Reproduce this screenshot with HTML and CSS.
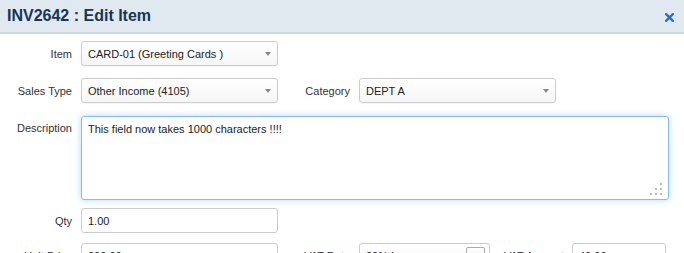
FILE: index.html
```html
<!DOCTYPE html>
<html lang="en">
<head>
  <meta charset="UTF-8" />
  <meta name="viewport" content="width=device-width, initial-scale=1.0" />
  <title>INV2642 : Edit Item</title>
  <link rel="stylesheet" href="styles.css">
</head>
<body>
  <header class="dialog-head">
    <h1>INV2642 : Edit Item</h1>
    <a class="close" href="#" title="Close">
      <svg width="9" height="9" viewBox="0 0 9 9">
        <path d="M1.2 1.2 L7.8 7.8 M7.8 1.2 L1.2 7.8" stroke="#2b72c2" stroke-width="2.4" stroke-linecap="square" />
      </svg>
    </a>
  </header>

  <div class="form">
    <div class="row row-item">
      <label>Item</label>
      <div class="select">
        <span>CARD-01 (Greeting Cards )</span>
        <span class="caret"></span>
      </div>
    </div>

    <div class="row row-sales">
      <label>Sales Type</label>
      <div class="select">
        <span>Other Income (4105)</span>
        <span class="caret"></span>
      </div>
      <label>Category</label>
      <div class="select">
        <span>DEPT A</span>
        <span class="caret"></span>
      </div>
    </div>

    <div class="row row-desc">
      <label>Description</label>
      <div class="textarea-wrap">
        <textarea class="description">This field now takes 1000 characters !!!!</textarea>
        <svg class="grip" width="12" height="12" viewBox="0 0 12 12">
          <rect x="10" y="0" width="2" height="2" fill="#bbb" />
          <rect x="5" y="5" width="2" height="2" fill="#bbb" />
          <rect x="10" y="5" width="2" height="2" fill="#bbb" />
          <rect x="0" y="10" width="2" height="2" fill="#bbb" />
          <rect x="5" y="10" width="2" height="2" fill="#bbb" />
          <rect x="10" y="10" width="2" height="2" fill="#bbb" />
        </svg>
      </div>
    </div>

    <div class="row row-qty">
      <label>Qty</label>
      <input class="text" type="text" value="1.00">
    </div>

    <div class="row">
      <label>Unit Price</label>
      <input class="text" type="text" value="200.00">
      <label>VAT Rate</label>
      <div class="select select-vat">
        <span>20% Income</span>
        <span class="btn-box"></span>
      </div>
      <label class="label-short">VAT Amount</label>
      <input class="text text-amount" type="text" value="40.00">
    </div>
  </div>
</body>
</html>
```

FILE: styles.css
```css
body {
  margin: 0;
  font-family: "Liberation Sans", Arial, sans-serif;
  font-size: 11px;
  color: #333;
  background-color: #fff;
}

.dialog-head {
  height: 32px;
  padding: 0 10px 0 7px;
  display: flex;
  align-items: center;
  justify-content: space-between;
  background-color: #dfe9ef;
  border-bottom: 2px solid #c9dce6;
}

.dialog-head h1 {
  margin: 0;
  font-size: 16px;
  font-weight: bold;
  color: #17355a;
}

.close {
  display: flex;
  margin-top: 2px;
}

.form {
  padding-top: 7px;
}

.row {
  display: flex;
  align-items: center;
}

.row-item {
  margin-bottom: 12px;
}

.row-sales {
  margin-bottom: 13px;
}

.row-desc {
  align-items: flex-start;
  margin-bottom: 8px;
}

.row-desc label {
  padding-top: 6px;
}

.row-qty {
  margin-bottom: 10px;
}

label {
  width: 72px;
  margin-right: 9px;
  text-align: right;
  flex-shrink: 0;
  color: #333;
}

.label-short {
  width: 74px;
  margin-right: 8px;
}

.select,
.text {
  box-sizing: border-box;
  width: 197px;
  height: 25px;
  border: 1px solid #ccc;
  border-radius: 3px;
  flex-shrink: 0;
}

.select {
  display: flex;
  align-items: center;
  justify-content: space-between;
  padding: 0 6px 0 6px;
  color: #222;
  background: linear-gradient(#fff, #f6f6f6);
  box-shadow: 0 1px 1px rgba(0,0,0,0.04);
}

.caret {
  width: 0;
  height: 0;
  margin-right: 0;
  border-left: 3px solid transparent;
  border-right: 3px solid transparent;
  border-top: 4px solid #888;
}

.text {
  padding: 0 6px;
  font-family: inherit;
  font-size: 11px;
  color: #222;
  background-color: #fff;
  outline: none;
}

.select-vat {
  width: 131px;
  padding-right: 4px;
}

.btn-box {
  box-sizing: border-box;
  width: 19px;
  height: 17px;
  border: 1px solid #aaa;
  border-radius: 2px;
  background: linear-gradient(#fff, #e9e9e9);
}

.text-amount {
  width: 94px;
}

.textarea-wrap {
  position: relative;
  display: flex;
}

.description {
  box-sizing: border-box;
  width: 588px;
  height: 84px;
  padding: 5px 6px;
  margin: 0;
  border: 1px solid #86bdf0;
  border-radius: 3px;
  box-shadow: 0 0 6px rgba(90,165,240,0.45);
  font-family: inherit;
  font-size: 11px;
  line-height: 14px;
  color: #222;
  resize: none;
  outline: none;
}

.grip {
  position: absolute;
  right: 7px;
  bottom: 5px;
}
```
